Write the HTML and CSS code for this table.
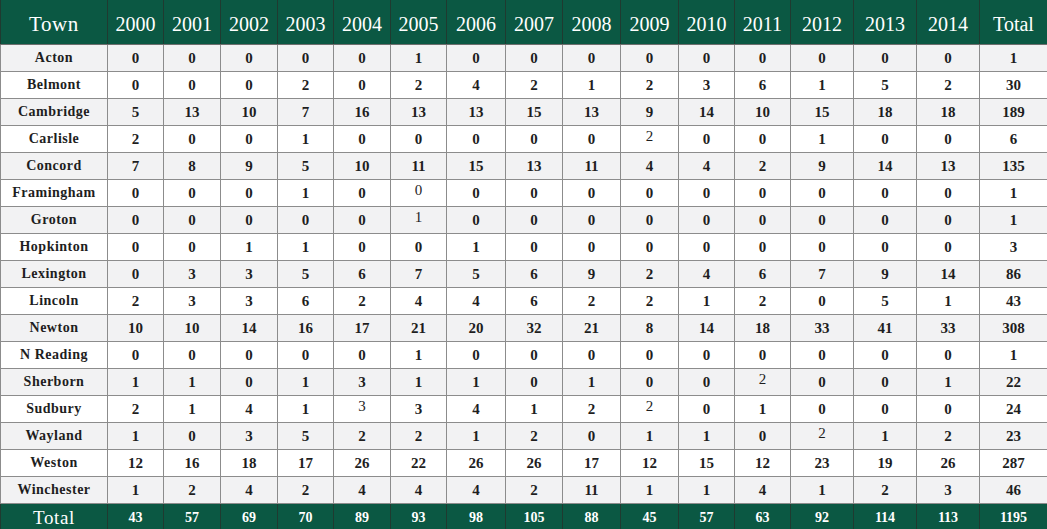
FILE: index.html
```html
<!DOCTYPE html>
<html>
<head>
<meta charset="utf-8">
<link rel="stylesheet" href="styles.css">
</head>
<body>
<table class="grid">
<colgroup>
<col class="c-town"><col class="c56"><col class="c57"><col class="c57"><col class="c56"><col class="c57"><col class="c56"><col class="c59"><col class="c57"><col class="c58"><col class="c58"><col class="c56"><col class="c56"><col class="c63"><col class="c63"><col class="c63"><col class="c-total">
</colgroup>
<thead>
<tr class="head"><th class="town-h">Town</th><th>2000</th><th>2001</th><th>2002</th><th>2003</th><th>2004</th><th>2005</th><th>2006</th><th>2007</th><th>2008</th><th>2009</th><th>2010</th><th>2011</th><th>2012</th><th>2013</th><th>2014</th><th>Total</th></tr>
</thead>
<tbody>
<tr class="alt"><td class="town">Acton</td><td>0</td><td>0</td><td>0</td><td>0</td><td>0</td><td>1</td><td>0</td><td>0</td><td>0</td><td>0</td><td>0</td><td>0</td><td>0</td><td>0</td><td>0</td><td>1</td></tr>
<tr><td class="town">Belmont</td><td>0</td><td>0</td><td>0</td><td>2</td><td>0</td><td>2</td><td>4</td><td>2</td><td>1</td><td>2</td><td>3</td><td>6</td><td>1</td><td>5</td><td>2</td><td>30</td></tr>
<tr class="alt"><td class="town">Cambridge</td><td>5</td><td>13</td><td>10</td><td>7</td><td>16</td><td>13</td><td>13</td><td>15</td><td>13</td><td>9</td><td>14</td><td>10</td><td>15</td><td>18</td><td>18</td><td>189</td></tr>
<tr><td class="town">Carlisle</td><td>2</td><td>0</td><td>0</td><td>1</td><td>0</td><td>0</td><td>0</td><td>0</td><td>0</td><td><span class="hi">2</span></td><td>0</td><td>0</td><td>1</td><td>0</td><td>0</td><td>6</td></tr>
<tr class="alt"><td class="town">Concord</td><td>7</td><td>8</td><td>9</td><td>5</td><td>10</td><td>11</td><td>15</td><td>13</td><td>11</td><td>4</td><td>4</td><td>2</td><td>9</td><td>14</td><td>13</td><td>135</td></tr>
<tr><td class="town">Framingham</td><td>0</td><td>0</td><td>0</td><td>1</td><td>0</td><td><span class="hi">0</span></td><td>0</td><td>0</td><td>0</td><td>0</td><td>0</td><td>0</td><td>0</td><td>0</td><td>0</td><td>1</td></tr>
<tr class="alt"><td class="town">Groton</td><td>0</td><td>0</td><td>0</td><td>0</td><td>0</td><td><span class="hi">1</span></td><td>0</td><td>0</td><td>0</td><td>0</td><td>0</td><td>0</td><td>0</td><td>0</td><td>0</td><td>1</td></tr>
<tr><td class="town">Hopkinton</td><td>0</td><td>0</td><td>1</td><td>1</td><td>0</td><td>0</td><td>1</td><td>0</td><td>0</td><td>0</td><td>0</td><td>0</td><td>0</td><td>0</td><td>0</td><td>3</td></tr>
<tr class="alt"><td class="town">Lexington</td><td>0</td><td>3</td><td>3</td><td>5</td><td>6</td><td>7</td><td>5</td><td>6</td><td>9</td><td>2</td><td>4</td><td>6</td><td>7</td><td>9</td><td>14</td><td>86</td></tr>
<tr><td class="town">Lincoln</td><td>2</td><td>3</td><td>3</td><td>6</td><td>2</td><td>4</td><td>4</td><td>6</td><td>2</td><td>2</td><td>1</td><td>2</td><td>0</td><td>5</td><td>1</td><td>43</td></tr>
<tr class="alt"><td class="town">Newton</td><td>10</td><td>10</td><td>14</td><td>16</td><td>17</td><td>21</td><td>20</td><td>32</td><td>21</td><td>8</td><td>14</td><td>18</td><td>33</td><td>41</td><td>33</td><td>308</td></tr>
<tr><td class="town">N Reading</td><td>0</td><td>0</td><td>0</td><td>0</td><td>0</td><td>1</td><td>0</td><td>0</td><td>0</td><td>0</td><td>0</td><td>0</td><td>0</td><td>0</td><td>0</td><td>1</td></tr>
<tr class="alt"><td class="town">Sherborn</td><td>1</td><td>1</td><td>0</td><td>1</td><td>3</td><td>1</td><td>1</td><td>0</td><td>1</td><td>0</td><td>0</td><td><span class="hi">2</span></td><td>0</td><td>0</td><td>1</td><td>22</td></tr>
<tr><td class="town">Sudbury</td><td>2</td><td>1</td><td>4</td><td>1</td><td><span class="hi">3</span></td><td>3</td><td>4</td><td>1</td><td>2</td><td><span class="hi">2</span></td><td>0</td><td>1</td><td>0</td><td>0</td><td>0</td><td>24</td></tr>
<tr class="alt"><td class="town">Wayland</td><td>1</td><td>0</td><td>3</td><td>5</td><td>2</td><td>2</td><td>1</td><td>2</td><td>0</td><td>1</td><td>1</td><td>0</td><td><span class="hi">2</span></td><td>1</td><td>2</td><td>23</td></tr>
<tr><td class="town">Weston</td><td>12</td><td>16</td><td>18</td><td>17</td><td>26</td><td>22</td><td>26</td><td>26</td><td>17</td><td>12</td><td>15</td><td>12</td><td>23</td><td>19</td><td>26</td><td>287</td></tr>
<tr class="alt"><td class="town">Winchester</td><td>1</td><td>2</td><td>4</td><td>2</td><td>4</td><td>4</td><td>4</td><td>2</td><td>11</td><td>1</td><td>1</td><td>4</td><td>1</td><td>2</td><td>3</td><td>46</td></tr>
</tbody>
<tfoot>
<tr class="foot"><td class="town-f">Total</td><td>43</td><td>57</td><td>69</td><td>70</td><td>89</td><td>93</td><td>98</td><td>105</td><td>88</td><td>45</td><td>57</td><td>63</td><td>92</td><td>114</td><td>113</td><td>1195</td></tr>
</tfoot>
</table>
</body>
</html>
```

FILE: styles.css
```css
html, body {
  margin: 0;
  padding: 0;
  background: #ffffff;
}

.grid {
  width: 1047px;
  border-collapse: collapse;
  table-layout: fixed;
  font-family: "Liberation Serif", "Times New Roman", serif;
  color: #1e1e1e;
}

.c-town { width: 107px; }
.c56 { width: 56px; }
.c57 { width: 57px; }
.c58 { width: 58px; }
.c59 { width: 59px; }
.c63 { width: 63px; }
.c-total { width: 68px; }

.grid th,
.grid td {
  padding: 0;
  text-align: center;
  vertical-align: middle;
  white-space: nowrap;
  overflow: hidden;
}

.head th {
  height: 39px;
  padding-top: 5px;
  background: #0b5843;
  color: #ffffff;
  font-family: "Liberation Serif", serif;
  font-weight: normal;
  font-size: 20px;
  border-left: 1px solid #1f3a30;
  border-right: 1px solid #1f3a30;
  border-bottom: 1px solid #6e6e6e;
}

.head th.town-h {
  letter-spacing: 0.6px;
  font-size: 21px;
}

tbody td {
  height: 26px;
  font-size: 15px;
  font-weight: bold;
  border: 1px solid #8c8c8c;
  background: #ffffff;
}

tbody tr.alt td {
  background: #f2f2f3;
}

tbody td.town {
  font-size: 14px;
  letter-spacing: 0.5px;
}

.hi {
  display: inline-block;
  font-weight: normal;
  padding-bottom: 5px;
}

.foot td {
  height: 26px;
  padding-top: 1px;
  background: #0b5843;
  color: #ffffff;
  font-size: 14px;
  font-weight: bold;
  border-left: 1px solid #1f3a30;
  border-right: 1px solid #1f3a30;
  border-top: 1px solid #2d2d2d;
}

.foot td.town-f {
  font-size: 19px;
  font-weight: normal;
  letter-spacing: 0.6px;
}
```
